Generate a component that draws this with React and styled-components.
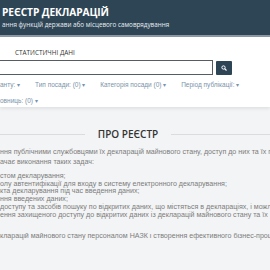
import React from 'react';
import styled, {createGlobalStyle} from 'styled-components';

const GlobalStyle = createGlobalStyle`
    body {
        margin: 0;
        background: #f3f4f5;
        font-family: "Open Sans", "Liberation Sans", sans-serif;
        overflow: hidden;
    }
`

const Header = styled.header`
    background: #2e4556;
    height: 37px;
    padding: 6px 0 0 2px;
    box-sizing: border-box;
    border-bottom: 2px solid #8a98a4;
    color: white;
    white-space: nowrap;
`

const Title = styled.div`
    font-size: 10.2px;
    font-weight: bold;
    line-height: 13px;
    letter-spacing: -0.1px;
`

const Subtitle = styled.div`
    font-size: 6.3px;
    line-height: 11px;
    color: #e8edf1;
`

const SearchPanel = styled.section`
    background: white;
    padding: 12px 0 5px 0;
    box-shadow: 0 2px 3px rgba(0,0,0,0.08);
    height: 70px;
    box-sizing: border-box;
`

const StatsLabel = styled.div`
    font-size: 6.4px;
    color: #333;
    padding-left: 15px;
    line-height: 8px;
    text-transform: uppercase;
`

const SearchRow = styled.div`
    display: flex;
    align-items: center;
    gap: 3px;
    margin-top: 3px;
`

const SearchInput = styled.div`
    width: 212px;
    height: 13px;
    border: 1px solid #555d63;
    border-left: none;
    box-sizing: content-box;
    background: white;
`

const SearchButton = styled.div`
    width: 16px;
    height: 14px;
    background: #2e4556;
    border-radius: 1px;
    display: flex;
    align-items: center;
    justify-content: center;
`

const FilterRows = styled.div`
    display: flex;
    flex-direction: column;
    gap: 6px;
    margin-top: 5px;
`

const FilterRow = styled.div`
    display: flex;
    gap: 15px;
    white-space: nowrap;
`

const Filter = styled.span`
    font-family: "Liberation Sans", Arial, sans-serif;
    font-size: 6.5px;
    line-height: 9px;
    color: #7a93aa;
    &::after {
        content: " ▾";
        font-size: 6px;
    }
`

const Content = styled.main`
    padding-top: 20px;
`

const SectionTitle = styled.div`
    display: flex;
    align-items: center;
    gap: 13px;
    width: calc(100% + 14px);
    margin-left: -14px;
    font-size: 10px;
    line-height: 14px;
    font-weight: 600;
    color: #333;
    &::before, &::after {
        content: "";
        flex: 1;
        height: 1px;
        background: #dcdcdc;
    }
`

const Text = styled.div`
    font-family: "Liberation Sans", Arial, sans-serif;
    font-size: 7.1px;
    color: #7c7c7c;
    white-space: nowrap;
    overflow: hidden;
    line-height: ${p => p.lh || 7.7}px;
    margin-top: ${p => p.mt || 0}px;
`

const Line = styled.div``

const App = () => {
    return (
        <>
            <GlobalStyle/>
            <Header>
                <Title>РЕЄСТР ДЕКЛАРАЦІЙ</Title>
                <Subtitle>ання функцій держави або місцевого самоврядування</Subtitle>
            </Header>
            <SearchPanel>
                <StatsLabel>Статистичні дані</StatsLabel>
                <SearchRow>
                    <SearchInput/>
                    <SearchButton>
                        <svg width="6" height="6" viewBox="0 0 12 12">
                            <circle cx="5" cy="5" r="3.3" fill="none" stroke="white" strokeWidth="2"/>
                            <line x1="7.5" y1="7.5" x2="11" y2="11" stroke="white" strokeWidth="2.2"/>
                        </svg>
                    </SearchButton>
                </SearchRow>
                <FilterRows>
                    <FilterRow>
                        <Filter>анту:</Filter>
                        <Filter>Тип посади: (0)</Filter>
                        <Filter>Категорія посади (0)</Filter>
                        <Filter>Період публікації:</Filter>
                    </FilterRow>
                    <FilterRow>
                        <Filter>овниць: (0)</Filter>
                    </FilterRow>
                </FilterRows>
            </SearchPanel>
            <Content>
                <SectionTitle>ПРО РЕЄСТР</SectionTitle>
                <Text mt={6} lh={10}>
                    <Line>ння публічними службовцями їх декларацій майнового стану, доступ до них та їх перевірку</Line>
                    <Line>ачає виконання таких задач:</Line>
                </Text>
                <Text mt={6}>
                    <Line>стом декларування;</Line>
                    <Line>олу автентифікації для входу в систему електронного декларування;</Line>
                    <Line>кта декларування під час введення даних;</Line>
                    <Line>ння введених даних;</Line>
                    <Line>доступу та засобів пошуку по відкритих даних, що містяться в деклараціях, і можливості</Line>
                    <Line>ення захищеного доступу до відкритих даних із декларацій майнового стану та їх</Line>
                </Text>
                <Text mt={14}>
                    <Line>кларацій майнового стану персоналом НАЗК і створення ефективного бізнес-процесу</Line>
                </Text>
            </Content>
        </>
    )
}

export default App
